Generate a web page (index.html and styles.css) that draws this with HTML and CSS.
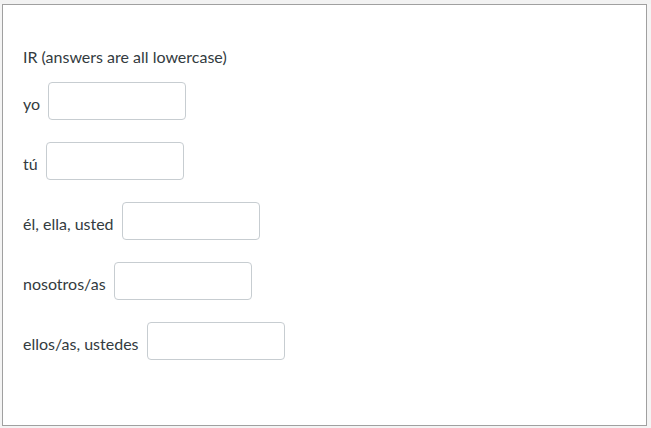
FILE: index.html
```html
<!DOCTYPE html>
<html>
<head>
<meta charset="utf-8">
<link rel="stylesheet" href="styles.css">
</head>
<body>
<div class="topbar"></div>
<div class="frame">
  <div class="question">
    <p class="title">IR (answers are all lowercase)</p>
    <div class="row"><span class="label">yo</span><input class="answer" type="text"></div>
    <div class="row"><span class="label">tú</span><input class="answer" type="text"></div>
    <div class="row"><span class="label">él, ella, usted</span><input class="answer" type="text"></div>
    <div class="row"><span class="label">nosotros/as</span><input class="answer" type="text"></div>
    <div class="row"><span class="label">ellos/as, ustedes</span><input class="answer" type="text"></div>
  </div>
</div>
</body>
</html>
```

FILE: styles.css
```css
html, body {
  margin: 0;
  padding: 0;
  background: #f4f4f4;
}
body {
  width: 651px;
  height: 428px;
  overflow: hidden;
  font-family: Lato, "Liberation Sans", sans-serif;
  font-size: 16px;
  color: #333b40;
}
.topbar {
  height: 4px;
  background: #f2f2f2;
}
.frame {
  margin-left: 2px;
  width: 645px;
  height: 422px;
  border: 1px solid #a0a0a0;
  background: #fff;
  box-sizing: border-box;
}
.question {
  padding: 40px 0 0 20px;
}
.title {
  margin: 0;
  line-height: 24px;
  height: 24px;
}
.row {
  display: flex;
  align-items: center;
  gap: 8px;
  height: 38px;
  margin-top: 22px;
}
.row:first-of-type {
  margin-top: 13px;
}
.label {
  padding-top: 6px;
  line-height: 20px;
}
.answer {
  width: 138px;
  height: 38px;
  box-sizing: border-box;
  border: 1px solid #c7cdd1;
  border-radius: 4px;
  background: #fff;
  margin: 0;
  padding: 0 8px;
  font-family: inherit;
  font-size: 16px;
}
```
